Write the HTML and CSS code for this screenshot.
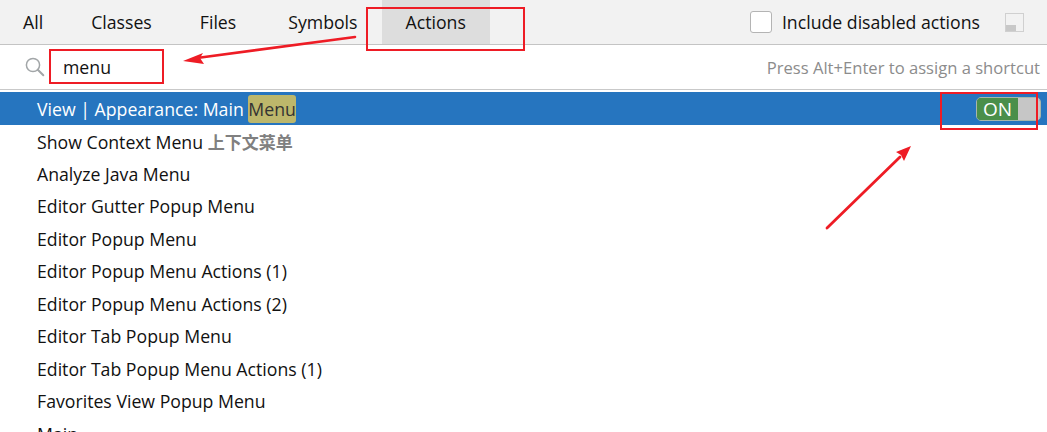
FILE: index.html
```html
<!DOCTYPE html>
<html lang="en">
<head>
<meta charset="utf-8">
<title>Search Everywhere</title>
<link rel="stylesheet" href="styles.css">
</head>
<body>
<div class="popup">
  <header class="tabbar">
    <nav class="tabs">
      <span class="tab tab-all">All</span>
      <span class="tab">Classes</span>
      <span class="tab">Files</span>
      <span class="tab tab-symbols">Symbols</span>
      <span class="tab tab-actions">Actions</span>
    </nav>
    <div class="options">
      <span class="checkbox"></span>
      <span class="option-label">Include disabled actions</span>
      <svg class="pin" width="19" height="19" viewBox="0 0 19 19"><rect x="0.5" y="0.5" width="18" height="18" fill="#f2f2f2" stroke="#d0d0d0"/><rect x="1" y="12" width="10" height="6" fill="#c8c8c8"/></svg>
    </div>
  </header>
  <div class="searchbar">
    <svg class="search-icon" width="20" height="20" viewBox="0 0 20 20"><circle cx="8" cy="8" r="6.6" fill="none" stroke="#a2a6a8" stroke-width="1.5"/><path d="M12.8 12.8 L18.3 18.3" stroke="#a2a6a8" stroke-width="2" stroke-linecap="round"/></svg>
    <span class="query">menu</span>
    <span class="hint">Press Alt+Enter to assign a shortcut</span>
  </div>
  <ul class="results">
    <li class="row row-selected">
      <span>View | Appearance: Main <mark class="match">Menu</mark></span>
      <span class="toggle"><span class="toggle-on">ON</span><span class="toggle-off"></span></span>
    </li>
    <li class="row"><span>Show Context Menu <b class="cn">上下文菜单</b></span></li>
    <li class="row"><span>Analyze Java Menu</span></li>
    <li class="row"><span>Editor Gutter Popup Menu</span></li>
    <li class="row"><span>Editor Popup Menu</span></li>
    <li class="row"><span>Editor Popup Menu Actions (1)</span></li>
    <li class="row"><span>Editor Popup Menu Actions (2)</span></li>
    <li class="row"><span>Editor Tab Popup Menu</span></li>
    <li class="row"><span>Editor Tab Popup Menu Actions (1)</span></li>
    <li class="row"><span>Favorites View Popup Menu</span></li>
    <li class="row"><span>Main</span></li>
  </ul>
  <svg class="annotations" width="1047" height="432" viewBox="0 0 1047 432">
    <g fill="none" stroke="#ee1c25" stroke-width="2">
      <rect x="367" y="8" width="157" height="42"/>
      <rect x="50" y="50" width="113" height="33"/>
      <rect x="941" y="93" width="96" height="36"/>
    </g>
    <path d="M355 37 L197 58" stroke="#ee1c25" stroke-width="2.6" stroke-linecap="round"/>
    <path d="M183 61 L203 53 L200 58 L204 64 Z" fill="#ee1c25"/>
    <path d="M827 228 L900 157" stroke="#ee1c25" stroke-width="2.8" stroke-linecap="round"/>
    <path d="M911 146 L904 161 L901 155 L896 152 Z" fill="#ee1c25"/>
  </svg>
</div>
</body>
</html>
```
FILE: styles.css
```css
html, body {
  margin: 0;
  padding: 0;
  background: #fff;
}
.popup {
  position: relative;
  width: 1047px;
  height: 432px;
  overflow: hidden;
  font-family: "Open Sans", "Noto Sans CJK SC", sans-serif;
  font-size: 17.7px;
  color: #111;
}
.tabbar {
  display: flex;
  justify-content: space-between;
  height: 44px;
  background: #f2f2f2;
  border-bottom: 1px solid #c4c4c4;
}
.tabs {
  display: flex;
}
.tab {
  display: flex;
  align-items: center;
  padding: 0 24px;
}
.tab-all { padding-left: 23px; }
.tab-symbols { margin-left: 4px; }
.tab-actions { background: #dddddd; }
.options {
  display: flex;
  align-items: center;
  padding-right: 23px;
}
.checkbox {
  width: 20px;
  height: 20px;
  border: 1px solid #b4b4b4;
  border-radius: 3px;
  background: #fff;
  margin-right: 10px;
}
.option-label {
  margin-right: 25px;
}
.searchbar {
  display: flex;
  align-items: center;
  height: 44px;
  border-bottom: 1px solid #c9c9c9;
  padding-left: 25px;
  padding-right: 7px;
}
.search-icon {
  margin-right: 18px;
}
.query {
  flex: 1;
}
.hint {
  color: #8c8c8c;
  font-size: 16.6px;
}
.results {
  list-style: none;
  margin: 2px 0 0;
  padding: 0;
}
.row {
  display: flex;
  align-items: center;
  justify-content: space-between;
  height: 32.5px;
  padding: 0 6px 0 37px;
}
.row-selected {
  background: #2675bf;
  color: #fff;
  height: 33px;
}
.match {
  display: inline-block;
  background: #bdb76b;
  color: #333;
  border-radius: 3px;
  line-height: 28px;
  height: 28px;
}
.cn {
  color: #808080;
  font-weight: 700;
  font-size: 17px;
}
.toggle {
  display: flex;
  width: 65px;
  height: 24px;
  box-sizing: border-box;
  border: 1px solid #a9b6a9;
  border-radius: 5px;
  overflow: hidden;
}
.toggle-on {
  width: 41px;
  background: #4a8f4a;
  color: #fff;
  font-size: 19px;
  line-height: 22px;
  text-align: center;
}
.toggle-off {
  flex: 1;
  background: #c6c6c6;
}
.annotations {
  position: absolute;
  left: 0;
  top: 0;
}
```
